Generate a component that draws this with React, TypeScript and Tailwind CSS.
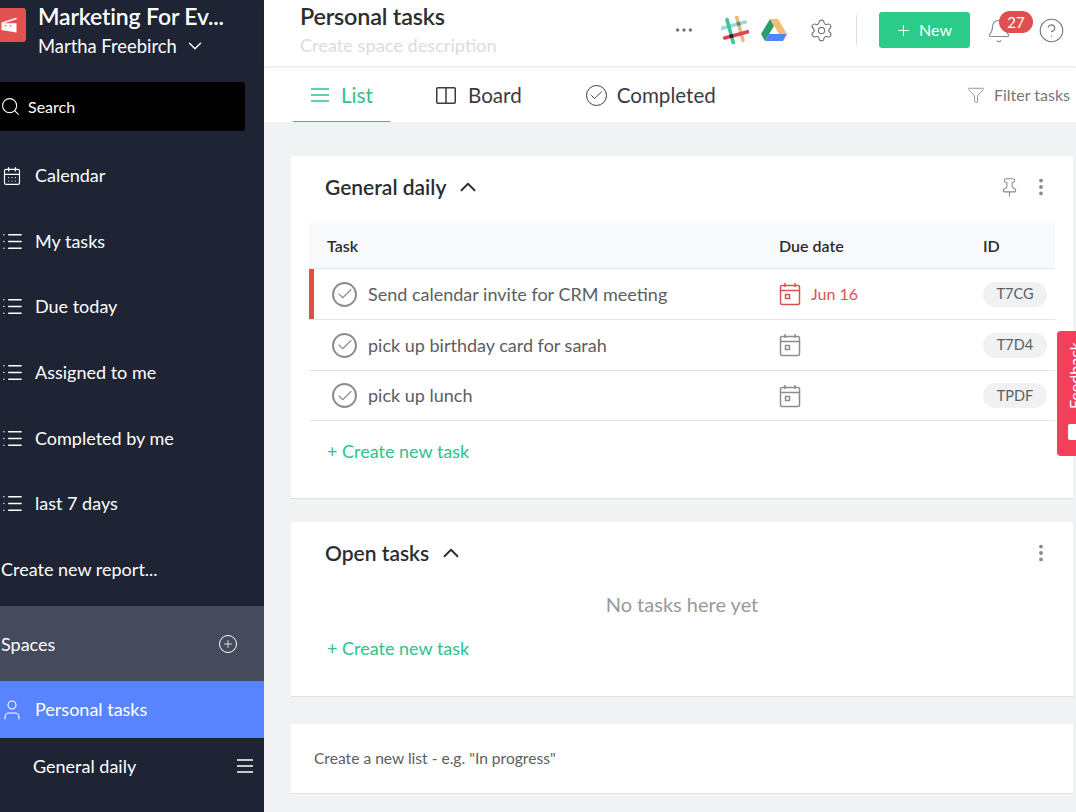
import { CalendarDays, Check, ChevronDown, ChevronUp, CircleHelp, Ellipsis, EllipsisVertical, Bell, Funnel, List, Pin, Plus, Search, Settings, User } from "lucide-react";

const NAV_ITEMS = ["My tasks", "Due today", "Assigned to me", "Completed by me", "last 7 days"];

const TASKS = [
  { title: "Send calendar invite for CRM meeting", due: "Jun 16", id: "T7CG", h: "h-[51px]", overdue: true },
  { title: "pick up birthday card for sarah", due: "", id: "T7D4", h: "h-[51px]", overdue: false },
  { title: "pick up lunch", due: "", id: "TPDF", h: "h-[50px]", overdue: false },
];

function CheckCircle({ className }: { className: string }) {
  return (
    <span className={`flex shrink-0 items-center justify-center rounded-full border-2 ${className}`}>
      <Check size={18} strokeWidth={1.5} />
    </span>
  );
}

function DueIcon({ className }: { className: string }) {
  return (
    <svg viewBox="0 0 22 24" className={`h-6 w-[22px] ${className}`} fill="none" stroke="currentColor" strokeWidth="1.5">
      <rect x="1.5" y="3.5" width="19" height="19" rx="1.5" />
      <path d="M1.5 8.5h19M6 1v4M16 1v4" />
      <rect x="6.5" y="12.5" width="4" height="4" />
    </svg>
  );
}

function SlackLogo() {
  return (
    <svg viewBox="0 0 28 28" className="h-7 w-7">
      <g transform="rotate(-15 14 14)" strokeLinecap="round" strokeWidth="3.6" fill="none">
        <path d="M19 2v24" stroke="#f0b77c" />
        <path d="M2 9h24" stroke="#9adbd5" />
        <path d="M9 2v24" stroke="#3cc798" />
        <path d="M2 19h24" stroke="#e0454f" />
        <path d="M7.2 19h3.6" stroke="#222" strokeLinecap="butt" />
        <path d="M17.2 9h3.6" stroke="#5d8a74" strokeLinecap="butt" />
      </g>
    </svg>
  );
}

function DriveLogo() {
  return (
    <svg viewBox="0 0 26 24" className="h-6 w-[26px]">
      <path d="M9 1h8l9 15h-8z" fill="#f5bd70" />
      <path d="M9 1 0 16l4 7 9-15z" fill="#2e9d68" />
      <path d="M8 16h18l-4 7H4z" fill="#4f86f7" />
    </svg>
  );
}

function Card({ title, pinned, children, className }: { title: string; pinned?: boolean; children: React.ReactNode; className: string }) {
  return (
    <section className={`bg-white rounded-t-[3px] border-b border-[#dfe1e4] ${className}`}>
      <div className="flex items-center pl-[34px] pr-[21px] pt-[15px]">
        <h2 className="text-[21px] leading-[32px] font-semibold text-[#2b2d30]">{title}</h2>
        <ChevronUp size={26} strokeWidth={1.7} className="ml-[9px] text-[#2b2d30]" />
        <div className="ml-auto flex items-center gap-[10px] text-[#8a8a8a]">
          {pinned && <Pin size={21} strokeWidth={1.2} />}
          <EllipsisVertical size={22} strokeWidth={2.2} />
        </div>
      </div>
      {children}
    </section>
  );
}

function App() {
  return (
    <div className="flex h-[812px] w-[1076px] overflow-hidden bg-[#f1f2f4] font-['Lato','Liberation_Sans',sans-serif]">
      <aside className="flex h-full w-[264px] shrink-0 flex-col bg-[#1e2433] text-white">
        <div className="flex h-[82px] pt-[4px]">
          <div className="mt-[4px] -ml-[8px] flex h-[34px] w-[34px] items-center justify-center rounded-[3px] bg-[#e2504f]">
            <svg viewBox="0 0 24 20" className="h-[20px] w-[20px]">
              <path d="M3 7 21 1v2L6 8h15v11L3 16z" fill="#fff" />
              <circle cx="8" cy="11" r="1" fill="#e2504f" />
              <circle cx="14" cy="11" r="1" fill="#e2504f" />
            </svg>
          </div>
          <div className="ml-[12px]">
            <div className="text-[23px] leading-[24px] font-semibold tracking-[-0.15px] whitespace-nowrap">Marketing For Ev...</div>
            <div className="mt-[6px] flex items-center text-[18.4px] leading-[24px]">
              Martha Freebirch
              <ChevronDown size={22} strokeWidth={1.5} className="ml-[7px]" />
            </div>
          </div>
        </div>

        <div className="flex h-[49px] w-[245px] items-center rounded-r-[3px] bg-black text-[16px]">
          <Search size={21} strokeWidth={1.2} />
          <span className="ml-[7px]">Search</span>
        </div>

        <div className="mt-[12px] flex h-[65.6px] items-center pl-[2px] text-[18px]">
          <CalendarDays size={20} strokeWidth={1.4} />
          <span className="ml-[13px]">Calendar</span>
        </div>
        {NAV_ITEMS.map((item) => (
          <div key={item} className="flex h-[65.6px] items-center pl-[1px] text-[18px]">
            <List size={23} strokeWidth={1.4} />
            <span className="ml-[11px]">{item}</span>
          </div>
        ))}
        <div className="flex h-[65.6px] items-center pl-[1px] text-[18px]">Create new report...</div>

        <div className="mt-[4px] flex h-[75px] shrink-0 items-center bg-[#454a5c] pl-[1px] pr-[27px] pt-[1px] text-[18px]">
          Spaces
          <span className="ml-auto flex h-[18px] w-[18px] items-center justify-center rounded-full border border-white">
            <Plus size={12} strokeWidth={1.6} />
          </span>
        </div>
        <div className="flex h-[57px] shrink-0 items-center bg-[#5884ff] text-[18px]">
          <User size={24} strokeWidth={1.1} />
          <span className="ml-[11px]">Personal tasks</span>
        </div>
        <div className="flex h-[58px] shrink-0 items-center pb-[2px] pl-[33px] pr-[11px] text-[18px]">
          General daily
          <svg viewBox="0 0 16 14" className="ml-auto h-[14px] w-[16px]" stroke="currentColor" strokeWidth="1.4">
            <path d="M0 1h16M0 7h16M0 13h16" />
          </svg>
        </div>
      </aside>

      <main className="relative flex h-full min-w-0 flex-1 flex-col">
        <header className="z-10 flex h-[66px] shrink-0 items-center bg-white pl-[36px] shadow-[0_1px_3px_rgba(0,0,0,0.12)]">
          <div className="-mt-[6px]">
            <h1 className="text-[23.4px] leading-[30px] font-semibold tracking-[-0.2px] text-[#2b2d30]">Personal tasks</h1>
            <p className="text-[18.2px] leading-[28px] text-[#dcdcdc]">Create space description</p>
          </div>
          <div className="ml-auto -mt-[6px] flex items-center">
            <Ellipsis size={22} strokeWidth={1.8} className="text-[#777]" />
            <span className="ml-[26px]"><SlackLogo /></span>
            <span className="ml-[12px]"><DriveLogo /></span>
            <Settings size={25} strokeWidth={1.1} className="ml-[22px] text-[#777]" />
            <span className="ml-[22px] h-[30px] w-px bg-[#ddd]" />
            <button type="button" className="ml-[22px] flex h-[36px] w-[91px] items-center justify-center gap-[7px] rounded-[3px] bg-[#2bcb8a] pr-[2px] text-[16px] text-white">
              <Plus size={17} strokeWidth={1.5} />
              New
            </button>
            <span className="relative ml-[16px] mr-[26px] mt-[4px] flex h-[28px] w-[26px]">
              <Bell size={26} strokeWidth={1} className="text-[#888]" />
              <span className="absolute -top-[7px] left-[13px] flex h-[22px] w-[34px] items-center justify-center rounded-full bg-[#e04f4f] text-[15px] text-white">27</span>
            </span>
            <CircleHelp size={27} strokeWidth={1} className="mr-[11px] text-[#777]" />
          </div>
        </header>

        <nav className="flex h-[56px] shrink-0 items-center bg-white pl-[29px] pr-[6px] text-[20.6px] text-[#3a3c40]">
          <div className="flex h-full w-[97px] items-center gap-[12px] border-b border-[#2fc28c] pl-[18px] pt-[3px] text-[#2fc28c]">
            <svg viewBox="0 0 18 14" className="h-[14px] w-[18px]" stroke="currentColor" strokeWidth="1.4">
              <path d="M0 1h18M0 7h18M0 13h18" />
            </svg>
            List
          </div>
          <div className="ml-[46px] flex items-center gap-[12px] pt-[3px]">
            <svg viewBox="0 0 20 17" className="h-[17px] w-[20px]" fill="none" stroke="currentColor" strokeWidth="1.5">
              <rect x="0.75" y="0.75" width="18.5" height="15.5" rx="1" />
              <path d="M10 1v15" />
            </svg>
            Board
          </div>
          <div className="ml-[64px] flex items-center gap-[10px] pt-[3px]">
            <span className="flex h-[21px] w-[21px] items-center justify-center rounded-full border-[1.5px] border-[#3a3c40]">
              <Check size={15} strokeWidth={1.5} />
            </span>
            Completed
          </div>
          <div className="ml-auto flex items-center gap-[9px] pt-[1px] text-[16px] text-[#777]">
            <Funnel size={18} strokeWidth={1} />
            Filter tasks
          </div>
        </nav>

        <div className="flex flex-1 flex-col pl-[27px] pr-[3px] pt-[34px]">
          <Card title="General daily" pinned className="h-[343px]">
            <div className="mt-[20px] ml-[18px] w-[746px]">
              <div className="grid h-[46px] grid-cols-[470px_204px_1fr] items-center border-b border-[#e3e4e6] bg-[#f8f9fb] pt-[1px] text-[16px] font-semibold text-[#2b2d30]">
                <span className="pl-[18px]">Task</span>
                <span>Due date</span>
                <span>ID</span>
              </div>
              {TASKS.map((task) => (
                <div key={task.id} className={`grid grid-cols-[470px_204px_1fr] items-center border-b border-[#e3e4e6] ${task.h}`}>
                  <div className={`flex h-full items-center text-[18px] text-[#5c5e61] ${task.overdue ? "border-l-[5px] border-[#e04f4f] pl-[18px]" : "pl-[23px]"}`}>
                    <CheckCircle className="h-[25px] w-[25px] border-[#8d8d8d] text-[#8d8d8d]" />
                    <span className="ml-[11px]">{task.title}</span>
                  </div>
                  <div className={`flex items-center gap-[10px] text-[16px] ${task.overdue ? "text-[#e04f4f]" : "text-[#8d8d8d]"}`}>
                    <DueIcon className="ml-[0px]" />
                    {task.due && <span>{task.due}</span>}
                  </div>
                  <span className="flex h-[25px] w-[64px] items-center justify-center rounded-full bg-[#f0f1f2] text-[14.5px] text-[#5c5e61]">{task.id}</span>
                </div>
              ))}
              <div className="mt-[18px] pl-[18px] text-[18px] leading-[24px] text-[#2fc28c]">+ Create new task</div>
            </div>
          </Card>

          <Card title="Open tasks" className="mt-[23px] h-[175px]">
            <p className="mt-[21px] text-center text-[20px] leading-[28px] text-[#9a9a9a]">No tasks here yet</p>
            <div className="mt-[18px] pl-[36px] text-[18px] leading-[24px] text-[#2fc28c]">+ Create new task</div>
          </Card>

          <section className="mt-[27px] flex h-[70px] items-center border-b border-[#dfe1e4] bg-white pl-[23px] pt-[1px] text-[15.6px] text-[#5c5e61]">
            Create a new list - e.g. "In progress"
          </section>
        </div>

        <div className="absolute left-[793px] top-[331px] flex h-[125px] w-[19px] flex-col items-center overflow-hidden rounded-l-[4px] bg-[#f43f5a] text-white">
          <span className="mt-[12px] ml-[16px] flex h-[66px] items-center whitespace-nowrap text-[16px] [writing-mode:vertical-rl] rotate-180">Feedback</span>
          <span className="mt-[15px] ml-[20px] h-[16px] w-[18px] shrink-0 rounded-[2px] bg-white" />
        </div>
      </main>
    </div>
  );
}

export default App;
